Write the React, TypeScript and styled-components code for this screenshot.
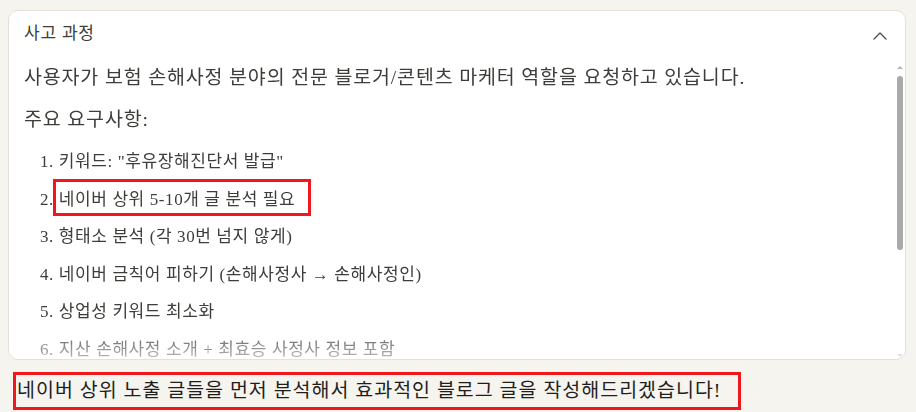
import React from "react";
import styled, { createGlobalStyle } from "styled-components";

const GlobalStyle = createGlobalStyle`
  html, body {
    margin: 0;
    padding: 0;
    background: #f5f4ef;
  }
  body {
    font-family: "Liberation Serif", "Noto Sans CJK KR", serif;
  }
`;

const Page = styled.div`
  padding: 10px 10px 0 8px;
  width: 898px;
`;

const ThoughtCard = styled.section`
  position: relative;
  height: 350px;
  box-sizing: border-box;
  background: #ffffff;
  border: 1px solid #e3e1da;
  border-radius: 10px;
  display: flex;
  flex-direction: column;
  overflow: hidden;
`;

const CardHeader = styled.div`
  height: 44px;
  box-sizing: border-box;
  flex: none;
  display: flex;
  align-items: center;
  justify-content: space-between;
  padding: 0 18px 4px 15px;
  font-size: 17px;
  letter-spacing: 0.8px;
  color: #3d3d3a;
`;

const Toggle = styled.button`
  border: none;
  background: transparent;
  padding: 0;
  display: flex;
  color: #4a4a47;
  margin-top: 9px;
`;

const ScrollArea = styled.div`
  flex: 1;
  overflow-y: auto;
  scrollbar-width: none;
  padding: 9px 0 0 15px;
  color: #3d3d3a;
  mask-image: linear-gradient(to bottom, #000 calc(100% - 34px), rgba(0, 0, 0, 0.35) 100%);

  &::-webkit-scrollbar {
    display: none;
  }
`;

/* drawn scrollbar, sits over the right edge of the card */
const ScrollTrack = styled.div`
  position: absolute;
  right: 2px;
  top: 52px;
  bottom: 2px;
  width: 6px;
  display: flex;
  flex-direction: column;
  align-items: center;
`;

const Arrow = styled.div<{ $down?: boolean }>`
  width: 0;
  height: 0;
  border-left: 3px solid transparent;
  border-right: 3px solid transparent;
  ${({ $down }) =>
    $down
      ? "border-top: 3px solid #e0e0e0; margin-top: auto;"
      : "border-bottom: 3px solid #b5b5b5; margin-top: 3px;"}
`;

const Thumb = styled.div`
  width: 6px;
  height: 174px;
  margin-top: 7px;
  border-radius: 3px;
  background: #a9a9a9;
`;

const Paragraph = styled.p`
  margin: 0 0 14px;
  font-size: 19.5px;
  letter-spacing: 0.85px;
  line-height: 28px;
`;

const Steps = styled.ol`
  margin: 11px 0 0;
  padding: 0 0 0 16px;
  list-style-position: inside;
`;

const Step = styled.li`
  font-size: 17px;
  letter-spacing: 0.6px;
  line-height: 28px;
  margin-bottom: 9.6px;
`;

const Marked = styled.span`
  border: 3px solid #f0181c;
  padding: 8px 13px 4px 3px;
  margin-left: -6px;
`;

const Reply = styled.div`
  margin: 12px 0 0 5px;
  font-size: 19.5px;
  letter-spacing: 1px;
  color: #1f1e1d;
`;

const ReplyBox = styled.span`
  display: inline-block;
  border: 3px solid #f0181c;
  line-height: 32px;
  padding: 0 17px 0 1px;
`;

const steps = [
  '키워드: "후유장해진단서 발급"',
  "네이버 상위 5-10개 글 분석 필요",
  "형태소 분석 (각 30번 넘지 않게)",
  "네이버 금칙어 피하기 (손해사정사 → 손해사정인)",
  "상업성 키워드 최소화",
  "지산 손해사정 소개 + 최효승 사정사 정보 포함",
  "2,500자 이상 분량으로 작성",
  "소제목 구성과 가독성 확보",
  "자연스러운 후기형 마무리",
];

export default function App() {
  return (
    <>
      <GlobalStyle />
      <Page>
        <ThoughtCard>
          <CardHeader>
            <span>사고 과정</span>
            <Toggle aria-label="접기">
              <svg width="14" height="8" viewBox="0 0 14 8" fill="none">
                <polyline
                  points="1,7 7,1 13,7"
                  stroke="currentColor"
                  strokeWidth="1.3"
                  strokeLinecap="round"
                  strokeLinejoin="round"
                />
              </svg>
            </Toggle>
          </CardHeader>
          <ScrollArea>
            <Paragraph>
              사용자가 보험 손해사정 분야의 전문 블로거/콘텐츠 마케터 역할을 요청하고 있습니다.
            </Paragraph>
            <Paragraph>주요 요구사항:</Paragraph>
            <Steps>
              {steps.map((s, i) => (
                <Step key={i}>{i === 1 ? <Marked>{s}</Marked> : s}</Step>
              ))}
            </Steps>
            <Paragraph>먼저 네이버 검색 결과를 확인해 보겠습니다.</Paragraph>
          </ScrollArea>
          <ScrollTrack>
            <Arrow />
            <Thumb />
            <Arrow $down />
          </ScrollTrack>
        </ThoughtCard>
        <Reply>
          <ReplyBox>
            네이버 상위 노출 글들을 먼저 분석해서 효과적인 블로그 글을 작성해드리겠습니다!
          </ReplyBox>
        </Reply>
      </Page>
    </>
  );
}
